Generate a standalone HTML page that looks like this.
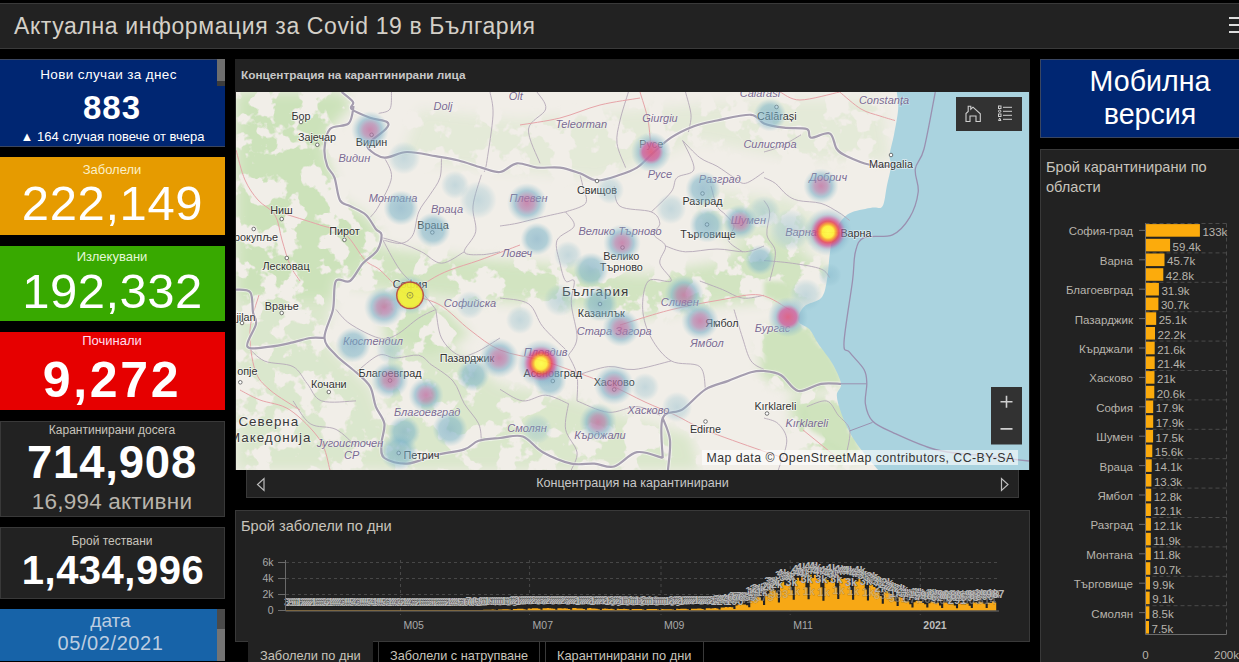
<!DOCTYPE html>
<html><head><meta charset="utf-8">
<style>
*{margin:0;padding:0;box-sizing:border-box}
html,body{width:1239px;height:662px;overflow:hidden;background:#000;font-family:"Liberation Sans",sans-serif}
.a{position:absolute}
.t{position:absolute;white-space:nowrap;line-height:1}
#hdr{left:0;top:3px;width:1239px;height:46px;background:#222;border-top:1px solid #3a3a3a;border-bottom:1px solid #3a3a3a}
.card{position:absolute;left:0;width:225px}
.c{text-align:center}
.ham{position:absolute;left:1229px;width:12px;height:2px;background:#ddd}
</style></head><body>
<div id="hdr" class="a"></div>
<div class="t" style="left:14px;top:15px;font-size:23px;letter-spacing:.6px;color:#d4d0c8">Актуална информация за Covid 19 в България</div>
<div class="ham" style="top:17px"></div><div class="ham" style="top:24px"></div><div class="ham" style="top:31px"></div>

<!-- left column -->
<div class="card" style="top:59px;height:88px;background:#002672;border-top:1px solid #3a4660;border-bottom:1px solid #3a4660"></div>
<div class="a" style="left:217px;top:59px;width:8px;height:27px;background:#3c3c3c"></div>
<div class="a" style="left:217px;top:59px;width:8px;height:22px;background:#6e6e6e"></div>
<div class="t c" style="left:0;width:217px;top:68px;font-size:13.5px;letter-spacing:0.35px;color:#fff">Нови случаи за днес</div>
<div class="t c" style="left:0;width:224px;top:91px;font-size:33px;font-weight:bold;color:#fff;letter-spacing:1px">883</div>
<div class="t c" style="left:0;width:225px;top:130px;font-size:13px;color:#fff">▲ 164 случая повече от вчера</div>

<div class="card" style="top:157px;height:78px;background:#e69b00"></div>
<div class="t c" style="left:0;width:224px;top:163px;font-size:13px;color:#fbf0c8">Заболели</div>
<div class="t c" style="left:0;width:225px;top:179px;font-size:49px;color:#fff;letter-spacing:0.6px">222,149</div>

<div class="card" style="top:246px;height:75px;background:#38a900"></div>
<div class="t c" style="left:0;width:224px;top:250px;font-size:13px;color:#e4f8d8">Излекувани</div>
<div class="t c" style="left:0;width:225px;top:266.5px;font-size:49px;color:#fff;letter-spacing:0.5px">192,332</div>

<div class="card" style="top:332px;height:78px;background:#e60000"></div>
<div class="t c" style="left:0;width:224px;top:334px;font-size:13px;color:#fde">Починали</div>
<div class="t c" style="left:0;width:224px;top:355px;font-size:50px;font-weight:bold;color:#fff;letter-spacing:2.7px">9,272</div>

<div class="card" style="top:421px;height:96px;background:#222;border:1px solid #393939"></div>
<div class="t c" style="left:0;width:224px;top:424px;font-size:12px;color:#c8c4bc">Карантинирани досега</div>
<div class="t c" style="left:0;width:224px;top:440px;font-size:45.5px;font-weight:bold;color:#fff;letter-spacing:0.8px">714,908</div>
<div class="t c" style="left:0;width:224px;top:491px;font-size:22.5px;color:#b8b4ac;letter-spacing:0.2px">16,994 активни</div>

<div class="card" style="top:527px;height:72px;background:#222;border:1px solid #393939"></div>
<div class="t c" style="left:0;width:224px;top:535px;font-size:12px;color:#c8c4bc">Брой тествани</div>
<div class="t c" style="left:0;width:226px;top:550px;font-size:40px;font-weight:bold;color:#fff;letter-spacing:0.5px">1,434,996</div>

<div class="card" style="top:609px;height:52px;background:#1763a8"></div>
<div class="a" style="left:217px;top:609px;width:8px;height:52px;background:#747474"></div>
<div class="a" style="left:217px;top:609px;width:8px;height:20px;background:#4a4a4a"></div>
<div class="t c" style="left:0;width:221px;top:611px;font-size:19px;color:#bccde0">дата</div>
<div class="t c" style="left:0;width:221px;top:633px;font-size:20px;letter-spacing:0.6px;color:#bccde0">05/02/2021</div>

<!-- map panel -->
<div class="a" style="left:235px;top:59px;width:795px;height:411px;background:#222"></div>
<div class="t" style="left:241px;top:70px;font-size:11.8px;font-weight:bold;color:#c8c8c8">Концентрация на карантинирани лица</div>
<!--MAP-->
<svg class="a" style="left:236px;top:92px" width="793" height="378" viewBox="236 92 793 378">
<defs>
<filter id="bl" x="-20%" y="-20%" width="140%" height="140%"><feGaussianBlur stdDeviation="4"/></filter>
<filter id="forest" x="236" y="92" width="793" height="378" filterUnits="userSpaceOnUse" color-interpolation-filters="sRGB"><feTurbulence type="fractalNoise" baseFrequency="0.04" numOctaves="4" seed="5" result="n"/><feColorMatrix in="n" type="matrix" values="0 0 0 0 0.80  0 0 0 0 0.885  0 0 0 0 0.73  16 0 0 0 -6.9"/></filter>
<filter id="bl6" x="-20%" y="-20%" width="140%" height="140%"><feGaussianBlur stdDeviation="6"/></filter>
<filter id="bl2" x="-20%" y="-20%" width="140%" height="140%"><feGaussianBlur stdDeviation="2"/></filter>
<radialGradient id="hb"><stop offset="0" stop-color="#74aac4" stop-opacity=".62"/><stop offset=".62" stop-color="#7cb4c8" stop-opacity=".55"/><stop offset=".85" stop-color="#8cbccc" stop-opacity=".22"/><stop offset="1" stop-color="#9cc8d8" stop-opacity="0"/></radialGradient>
<radialGradient id="hf"><stop offset="0" stop-color="#80b4c8" stop-opacity=".4"/><stop offset=".6" stop-color="#8cbccc" stop-opacity=".3"/><stop offset=".85" stop-color="#8cbccc" stop-opacity=".12"/><stop offset="1" stop-color="#9cc8d8" stop-opacity="0"/></radialGradient>
<radialGradient id="hp"><stop offset="0" stop-color="#c070a0" stop-opacity=".8"/><stop offset=".35" stop-color="#a878a8" stop-opacity=".65"/><stop offset=".62" stop-color="#7cb0c8" stop-opacity=".58"/><stop offset=".85" stop-color="#8cbccc" stop-opacity=".22"/><stop offset="1" stop-color="#9cc8d8" stop-opacity="0"/></radialGradient>
<radialGradient id="hr"><stop offset="0" stop-color="#dc5a80" stop-opacity=".92"/><stop offset=".42" stop-color="#c864a0" stop-opacity=".85"/><stop offset=".62" stop-color="#90b8cc" stop-opacity=".65"/><stop offset=".82" stop-color="#8cbccc" stop-opacity=".3"/><stop offset="1" stop-color="#8cc0d0" stop-opacity="0"/></radialGradient>
<radialGradient id="hy"><stop offset="0" stop-color="#ffff40"/><stop offset=".24" stop-color="#fff030"/><stop offset=".33" stop-color="#f8a028"/><stop offset=".45" stop-color="#e44058" stop-opacity=".95"/><stop offset=".58" stop-color="#c04c98" stop-opacity=".75"/><stop offset=".74" stop-color="#80aac8" stop-opacity=".45"/><stop offset="1" stop-color="#8cc0d0" stop-opacity="0"/></radialGradient>
</defs>
<rect x="236" y="92" width="793" height="378" fill="#f1eee8"/>
<mask id="gm" maskUnits="userSpaceOnUse" x="236" y="92" width="793" height="378"><g fill="#fff" filter="url(#bl6)"><path d="M236.0 92.0 L341.0 92.0 L352.0 105.0 L330.0 129.0 L324.0 150.0 L334.0 178.0 L340.0 200.0 L365.0 215.0 L381.0 235.0 L363.0 263.0 L336.0 281.0 L333.0 300.0 L236.0 300.0 Z" fill-opacity="1.0"/><path d="M236.0 300.0 L333.0 300.0 L324.0 338.0 L336.0 355.0 L370.0 387.0 L384.0 424.0 L384.0 470.0 L236.0 470.0 Z" fill-opacity="0.6"/><path d="M345.0 240.0 L400.0 250.0 L470.0 258.0 L560.0 265.0 L640.0 275.0 L720.0 262.0 L760.0 235.0 L800.0 250.0 L830.0 270.0 L800.0 300.0 L720.0 305.0 L640.0 318.0 L560.0 305.0 L470.0 300.0 L400.0 292.0 L345.0 285.0 Z" fill-opacity="0.85"/><path d="M380.0 300.0 L440.0 305.0 L470.0 335.0 L430.0 355.0 L385.0 335.0 Z" fill-opacity="0.9"/><path d="M384.0 330.0 L450.0 345.0 L500.0 385.0 L560.0 395.0 L620.0 415.0 L690.0 435.0 L700.0 470.0 L384.0 470.0 Z" fill-opacity="0.62"/><path d="M760.0 330.0 L805.0 322.0 L830.0 350.0 L842.0 385.0 L800.0 392.0 L762.0 378.0 Z" fill-opacity="1.0"/><path d="M790.0 398.0 L845.0 400.0 L875.0 455.0 L840.0 465.0 L795.0 440.0 Z" fill-opacity="1.0"/><path d="M420.0 110.0 L520.0 120.0 L640.0 110.0 L760.0 100.0 L880.0 100.0 L890.0 160.0 L800.0 160.0 L700.0 140.0 L600.0 178.0 L480.0 168.0 L400.0 160.0 Z" fill-opacity="0.35"/><path d="M700.0 190.0 L790.0 200.0 L830.0 230.0 L800.0 250.0 L740.0 250.0 L700.0 220.0 Z" fill-opacity="0.45"/></g></mask>
<g mask="url(#gm)"><rect x="236" y="92" width="793" height="378" filter="url(#forest)"/></g>
<path d="M764.0 338.0 C765.9 337.1 770.6 333.8 775.4 332.4 C780.2 331.0 787.4 330.0 792.6 329.5 C797.8 329.0 802.5 327.1 806.8 329.5 C811.1 331.9 814.0 338.1 818.3 343.8 C822.6 349.5 828.9 357.4 832.5 363.8 C836.1 370.2 841.6 379.1 839.7 382.4 C837.8 385.7 827.9 382.4 821.0 383.8 C814.1 385.2 805.0 392.4 798.3 391.0 C791.6 389.6 786.7 378.5 781.0 375.2 C775.3 371.9 766.8 371.7 764.0 371.0 Z M806.8 406.6 C810.6 406.1 824.0 402.8 829.7 403.8 C835.4 404.8 837.7 407.6 841.0 412.4 C844.3 417.1 846.4 426.1 849.7 432.3 C853.0 438.5 861.0 446.2 861.0 449.5 C861.0 452.8 854.9 453.7 849.7 452.3 C844.5 450.9 836.4 444.8 829.7 441.0 C823.0 437.2 813.0 431.4 809.7 429.5 Z M764.0 281.0 C767.8 281.3 782.7 280.2 787.0 283.0 C791.3 285.8 792.0 295.2 790.0 298.0 C788.0 300.8 779.3 300.3 775.0 300.0 C770.7 299.7 765.8 296.7 764.0 296.0 Z" fill="#cfe3bd" filter="url(#bl2)"/>
<path d="M896.8 92.0 C897.0 94.8 898.7 101.9 898.2 109.0 C897.7 116.1 895.4 127.2 894.0 134.8 C892.6 142.4 890.1 149.6 889.6 154.8 C889.1 160.0 891.5 161.0 891.0 166.2 C890.5 171.4 888.2 179.5 886.8 186.2 C885.4 192.9 884.9 202.6 882.5 206.2 C880.1 209.8 877.5 206.6 872.5 207.6 C867.5 208.6 857.2 210.3 852.5 212.0 C847.8 213.7 846.4 215.2 844.0 217.6 C841.6 220.0 838.7 223.8 838.2 226.2 C837.7 228.6 842.0 229.6 841.0 232.0 C840.0 234.4 834.4 236.7 832.5 240.5 C830.6 244.3 830.7 248.1 829.7 254.8 C828.8 261.6 828.2 273.8 826.8 281.0 C825.4 288.2 824.9 293.8 821.1 298.1 C817.3 302.4 807.8 302.9 804.0 306.7 C800.2 310.5 797.3 317.2 798.3 321.0 C799.2 324.8 806.4 325.7 809.7 329.5 C813.0 333.3 814.5 338.1 818.3 343.8 C822.1 349.5 828.7 357.1 832.5 363.8 C836.3 370.5 840.3 378.6 841.0 383.8 C841.7 389.0 836.8 390.4 836.8 395.2 C836.8 400.0 838.9 406.2 841.0 412.4 C843.1 418.6 846.4 426.1 849.7 432.3 C853.0 438.5 856.2 443.2 861.0 449.5 C865.8 455.8 875.3 466.6 878.2 470.0 L1029 470 L1029 92 Z" fill="#aad3df"/>
<path d="M391.5 92.0 C391.2 94.8 392.1 105.4 390.0 109.0 C387.9 112.6 380.6 112.7 378.7 113.4 M490.0 92.0 C490.5 95.8 493.5 103.6 493.0 115.0 C492.5 126.4 488.4 151.0 487.0 160.5 C485.6 170.0 484.8 170.1 484.3 172.0 M384.4 157.6 C385.6 160.9 392.4 169.5 391.5 177.6 C390.6 185.7 382.3 199.3 378.7 206.0 C375.1 212.7 371.4 215.7 370.0 217.6 M441.5 156.0 C441.2 159.6 441.9 171.2 440.0 177.6 C438.1 184.0 433.6 189.0 430.0 194.7 C426.4 200.4 421.5 205.3 418.7 212.0 C415.9 218.7 415.9 229.5 413.0 234.7 C410.1 239.9 406.3 242.4 401.5 243.3 C396.7 244.2 387.2 240.9 384.4 240.4 M481.4 174.8 C480.0 180.0 473.9 196.5 473.0 206.0 C472.1 215.5 477.1 224.2 475.7 231.8 C474.2 239.4 463.4 248.0 464.3 251.8 C465.2 255.6 475.4 254.7 481.4 254.7 C487.3 254.7 496.9 252.3 500.0 251.8 M381.5 237.5 C384.8 238.5 394.8 240.9 401.5 243.3 C408.2 245.7 414.8 248.5 421.5 251.8 C428.2 255.1 434.4 263.2 441.5 263.2 C448.6 263.2 460.5 253.7 464.3 251.8 M537.0 92.0 C538.5 94.8 547.1 102.8 545.7 109.0 C544.3 115.2 529.5 120.0 528.5 129.0 C527.5 138.1 538.1 157.6 540.0 163.3 M628.4 92.0 C627.0 96.8 621.9 111.9 620.0 120.5 C618.1 129.1 616.1 135.6 617.0 143.4 C617.9 151.2 624.2 163.6 625.6 167.6 M685.5 92.0 C686.4 95.8 690.5 108.1 691.0 114.8 C691.5 121.5 688.8 129.1 688.4 132.0 M565.6 211.9 C568.9 210.5 582.7 207.6 585.6 203.3 C588.5 199.0 583.7 190.9 582.8 186.2 C581.9 181.4 580.5 176.7 580.0 174.8 M500.0 226.0 C502.8 225.6 510.3 224.7 517.0 223.3 C523.7 221.9 531.9 219.5 540.0 217.6 C548.1 215.7 561.3 212.8 565.6 211.9 M565.6 211.9 C567.0 214.3 575.6 221.3 574.2 226.1 C572.8 230.8 559.4 234.2 557.0 240.4 C554.6 246.6 558.6 256.4 560.0 263.2 C561.4 270.0 563.2 278.0 565.6 281.0 C568.0 284.0 573.2 277.2 574.2 281.0 C575.2 284.8 570.8 294.3 571.3 303.8 C571.8 313.3 577.5 329.4 577.0 338.0 C576.5 346.6 569.9 352.3 568.5 355.2 M614.2 186.2 C615.2 189.5 613.8 201.9 620.0 206.2 C626.2 210.5 644.7 209.1 651.3 211.9 C657.9 214.8 659.3 219.5 659.8 223.3 C660.2 227.1 653.0 230.9 654.0 234.7 C655.0 238.5 664.5 241.2 665.5 246.0 C666.5 250.8 658.8 257.4 659.8 263.2 C660.8 269.0 673.1 278.0 671.2 281.0 C669.3 284.0 653.1 276.2 648.4 281.0 C643.6 285.8 642.2 300.0 642.7 309.5 C643.2 319.0 646.5 329.4 651.3 338.0 C656.0 346.6 663.1 356.1 671.2 360.9 C679.3 365.7 694.1 361.9 699.8 366.6 C705.5 371.4 704.5 385.6 705.5 389.4 M651.3 211.9 C654.6 208.6 666.9 197.6 671.2 191.9 C675.5 186.2 673.2 181.4 677.0 177.6 C680.8 173.8 693.1 175.2 694.0 169.0 C694.9 162.8 684.5 145.2 682.6 140.5 M711.0 186.2 C712.0 189.5 714.6 201.4 717.0 206.2 C719.4 210.9 722.7 211.4 725.5 214.7 C728.3 218.0 733.5 221.8 734.0 226.1 C734.5 230.4 726.9 236.1 728.3 240.4 C729.7 244.7 740.2 249.9 742.6 251.8 M665.5 246.0 C668.8 247.0 676.9 251.3 685.5 251.8 C694.1 252.3 707.0 249.0 717.0 249.0 C727.0 249.0 737.6 252.3 745.4 251.8 C753.2 251.3 760.9 247.0 764.0 246.0 M682.6 140.5 C685.5 143.3 694.1 153.3 699.8 157.6 C705.5 161.9 711.3 162.9 717.0 166.2 C722.7 169.5 729.3 174.8 734.0 177.6 C738.7 180.4 740.4 184.2 745.4 183.3 C750.4 182.4 760.9 173.9 764.0 172.0 M764.0 152.0 C766.8 151.1 774.8 149.2 781.0 146.3 C787.2 143.4 797.7 136.7 801.0 134.8 M764.0 177.6 C765.9 178.6 771.6 180.5 775.4 183.4 C779.2 186.3 783.0 192.0 786.8 194.8 C790.6 197.7 792.6 199.1 798.3 200.5 C804.0 201.9 814.4 201.5 821.0 203.4 C827.6 205.3 833.2 209.2 838.0 212.0 C842.8 214.8 847.8 219.1 849.7 220.5 M764.0 200.5 C765.0 202.4 769.2 206.3 769.7 212.0 C770.2 217.7 766.0 228.1 766.9 234.8 C767.8 241.5 774.9 244.3 775.4 252.0 C775.9 259.7 770.7 276.2 769.7 281.0 M764.0 260.5 C768.8 261.0 783.1 261.9 792.6 263.3 C802.1 264.7 814.8 266.6 821.0 269.0 C827.2 271.4 828.2 276.2 829.7 277.6 M336.0 309.5 C338.3 311.9 342.9 319.1 350.0 323.8 C357.1 328.6 371.1 336.1 378.7 338.0 C386.3 339.9 389.1 338.5 395.8 335.2 C402.5 331.9 412.0 322.4 418.7 318.1 C425.4 313.8 432.9 310.9 435.8 309.5 M356.0 372.3 C359.8 369.4 372.1 357.6 378.7 355.2 C385.3 352.8 389.1 358.0 395.8 358.0 C402.5 358.0 413.0 354.2 418.7 355.2 C424.4 356.2 428.1 362.4 430.0 363.8 M435.8 309.5 C436.8 314.2 437.7 330.4 441.5 338.0 C445.3 345.6 452.9 352.8 458.6 355.2 C464.3 357.6 468.8 355.3 475.7 352.4 C482.6 349.5 495.9 340.4 500.0 338.0 M430.0 363.8 C433.8 366.7 447.3 374.4 453.0 381.0 C458.7 387.6 460.0 396.6 464.3 403.7 C468.6 410.8 475.8 417.5 478.6 423.7 C481.5 429.9 480.9 437.9 481.4 440.8 M247.4 346.6 C250.2 349.0 256.9 357.7 264.5 361.0 C272.1 364.3 285.9 362.8 293.0 366.6 C300.1 370.4 302.5 378.0 307.3 383.7 C312.1 389.4 313.5 398.0 321.6 400.9 C329.7 403.8 350.3 400.9 356.0 400.9 M293.0 400.9 C295.9 404.7 303.0 418.9 310.2 423.7 C317.4 428.4 328.4 425.6 336.0 429.4 C343.6 433.2 352.7 443.6 356.0 446.5 M500.0 298.0 C504.8 299.0 521.4 299.0 528.5 303.8 C535.6 308.6 536.6 319.1 542.8 326.7 C549.0 334.3 561.8 345.7 565.6 349.5 M577.0 375.2 C582.2 373.8 598.9 367.6 608.4 366.6 C617.9 365.7 623.5 370.4 634.0 369.5 C644.5 368.6 665.0 362.3 671.2 360.9 M577.0 400.9 C582.2 402.8 598.4 411.4 608.4 412.3 C618.4 413.2 628.4 406.1 637.0 406.6 C645.6 407.1 656.0 413.7 659.8 415.1 M568.5 403.7 C568.0 408.0 564.2 421.3 565.6 429.4 C567.0 437.5 576.0 445.4 577.0 452.2 C578.0 459.0 572.2 467.0 571.3 470.0 M500.0 389.4 C503.8 391.3 515.2 399.9 522.8 400.9 C530.4 401.9 538.1 394.7 545.7 395.2 C553.3 395.7 564.7 402.3 568.5 403.7 M734.0 309.5 C735.4 314.2 739.8 329.4 742.6 338.0 C745.4 346.6 747.4 355.6 751.0 360.9 C754.6 366.1 761.8 368.1 764.0 369.5 M699.8 281.0 C703.6 282.4 715.5 286.8 722.6 289.6 C729.7 292.5 735.7 297.2 742.6 298.1 C749.5 299.1 760.4 295.8 764.0 295.3 M764.0 418.0 C766.4 419.0 774.5 420.0 778.3 423.8 C782.1 427.6 786.8 433.3 786.8 441.0 C786.8 448.7 779.7 465.2 778.3 470.0 M806.8 406.6 C810.1 405.7 821.6 399.6 826.8 401.0 C832.0 402.4 834.4 410.4 838.2 415.2 C842.0 419.9 848.3 423.3 849.7 429.5 C851.1 435.7 847.3 448.5 846.8 452.3 M435.8 309.5 C433.2 306.2 426.0 296.6 420.0 290.0 C414.0 283.4 406.4 278.8 400.0 270.0 C393.6 261.2 384.6 242.9 381.5 237.5 M568.5 355.2 C569.9 358.5 575.6 367.6 577.0 375.2 C578.4 382.8 577.0 396.6 577.0 400.9" fill="none" stroke="#b4a8b8" stroke-width="0.9"/>
<path d="M236.0 150.0 C237.5 155.0 241.3 171.7 245.0 180.0 C248.7 188.3 253.0 194.2 258.0 200.0 C263.0 205.8 271.0 208.3 275.0 215.0 C279.0 221.7 279.5 231.7 282.0 240.0 C284.5 248.3 287.0 258.2 290.0 265.0 C293.0 271.8 298.3 278.3 300.0 281.0 M282.0 213.0 C288.3 215.0 309.5 221.5 320.0 225.0 C330.5 228.5 337.5 228.2 345.0 234.0 C352.5 239.8 359.2 254.0 365.0 260.0 C370.8 266.0 374.2 265.0 380.0 270.0 C385.8 275.0 395.0 285.8 400.0 290.0 C405.0 294.2 408.3 294.2 410.0 295.0 M410.0 295.0 C415.0 296.7 430.0 299.2 440.0 305.0 C450.0 310.8 460.0 322.5 470.0 330.0 C480.0 337.5 488.3 345.0 500.0 350.0 C511.7 355.0 528.3 356.7 540.0 360.0 C551.7 363.3 558.3 365.8 570.0 370.0 C581.7 374.2 597.5 379.7 610.0 385.0 C622.5 390.3 634.2 397.0 645.0 402.0 C655.8 407.0 665.0 410.3 675.0 415.0 C685.0 419.7 690.8 424.2 705.0 430.0 C719.2 435.8 745.8 445.0 760.0 450.0 C774.2 455.0 785.0 458.3 790.0 460.0 M620.0 325.0 C628.3 322.5 653.3 314.2 670.0 310.0 C686.7 305.8 705.0 302.5 720.0 300.0 C735.0 297.5 748.3 293.3 760.0 295.0 C771.7 296.7 785.0 307.5 790.0 310.0 M240.0 390.0 C243.3 391.7 251.7 396.7 260.0 400.0 C268.3 403.3 280.0 403.3 290.0 410.0 C300.0 416.7 313.3 430.0 320.0 440.0 C326.7 450.0 328.3 465.0 330.0 470.0 M259.0 295.0 C257.5 300.8 250.7 317.5 250.0 330.0 C249.3 342.5 251.7 360.0 255.0 370.0 C258.3 380.0 262.5 383.3 270.0 390.0 C277.5 396.7 295.0 406.7 300.0 410.0 M803.0 430.0 L840.0 460.0 M839.7 92.0 C843.2 94.8 854.3 105.0 861.0 109.0 C867.7 113.0 874.3 114.1 880.0 116.0 C885.7 117.9 892.5 119.8 895.0 120.5 M780.0 92.0 C783.3 93.3 790.0 100.0 800.0 100.0 C810.0 100.0 833.1 93.3 839.7 92.0 M640.0 92.0 C641.3 96.7 646.2 110.3 648.0 120.0 C649.8 129.7 650.5 145.0 651.0 150.0 M520.0 125.0 C526.7 123.8 546.7 121.3 560.0 118.0 C573.3 114.7 586.7 108.3 600.0 105.0 C613.3 101.7 633.3 99.2 640.0 98.0 M790.0 230.0 C795.0 230.3 811.7 231.5 820.0 232.0 C828.3 232.5 836.7 232.8 840.0 233.0 M410.0 295.0 C413.3 292.5 423.3 284.2 430.0 280.0 C436.7 275.8 441.7 273.3 450.0 270.0 C458.3 266.7 468.3 264.2 480.0 260.0 C491.7 255.8 513.3 247.5 520.0 245.0" fill="none" stroke="#e6a4a8" stroke-width="1"/>
<path d="M935.3 92.0 C933.4 101.5 927.3 136.2 924.0 149.0 C920.7 161.8 916.3 161.8 915.3 169.0 C914.3 176.2 919.2 183.9 918.2 192.0 C917.2 200.1 913.9 210.5 909.6 217.6 C905.3 224.7 900.1 231.5 892.5 234.8 C884.9 238.1 870.2 234.7 864.0 237.6 C857.8 240.5 857.3 244.8 855.4 252.0 C853.5 259.2 854.4 265.9 852.5 281.0 C850.6 296.1 844.5 330.5 844.0 342.4 C843.5 354.3 846.4 347.9 849.7 352.4 C853.0 356.9 861.1 364.3 864.0 369.5 C866.9 374.7 866.6 378.1 866.8 383.8 C867.0 389.5 864.4 397.6 865.4 403.8 C866.4 410.0 868.0 416.2 872.5 421.0 C877.0 425.8 882.0 427.6 892.5 432.3 C903.0 437.1 921.0 445.7 935.3 449.5 C949.5 453.3 962.4 453.3 978.0 455.2 C993.6 457.1 1020.5 460.0 1029.0 461.0" fill="none" stroke="#9a90b0" stroke-width="1.3"/>
<path d="M841 383.8H866.8M849.7 430.9L872.5 422.4" fill="none" stroke="#9a90b0" stroke-width="1"/>
<path d="M341.6 92.0 C343.5 93.7 351.3 99.2 353.0 102.0 C354.7 104.8 348.8 106.4 351.6 109.0 C354.4 111.6 364.1 115.5 370.0 117.7 C375.9 119.9 384.4 120.1 387.0 122.0 C389.6 123.9 388.6 125.7 385.8 129.0 C383.0 132.3 372.9 138.7 370.0 142.0 C367.1 145.3 366.3 146.4 368.7 149.0 C371.1 151.6 378.0 157.1 384.4 157.6 C390.8 158.1 398.4 152.2 407.0 152.0 C415.6 151.8 427.2 154.8 435.8 156.2 C444.4 157.6 451.0 158.6 458.6 160.5 C466.2 162.4 474.5 165.7 481.4 167.6 C488.3 169.5 494.1 172.7 500.0 172.0 C505.9 171.3 510.8 164.0 517.0 163.3 C523.2 162.6 529.8 166.9 537.0 167.6 C544.2 168.3 552.8 166.6 560.0 167.6 C567.2 168.6 573.8 171.2 580.0 173.3 C586.2 175.5 590.3 180.2 597.0 180.5 C603.7 180.8 613.3 177.0 620.0 174.8 C626.7 172.7 631.8 170.9 637.0 167.6 C642.2 164.3 645.3 159.8 651.0 154.8 C656.7 149.8 663.8 142.5 671.0 137.7 C678.2 132.9 686.3 129.1 694.0 126.2 C701.7 123.3 707.5 122.4 717.0 120.5 C726.5 118.6 743.2 114.3 751.0 114.8 C758.8 115.3 758.5 121.2 764.0 123.4 C769.5 125.6 776.9 126.8 784.0 127.7 C791.1 128.6 802.3 127.3 806.8 129.0 C811.3 130.7 807.2 137.0 811.0 137.7 C814.8 138.4 825.4 131.5 829.7 133.4 C834.0 135.3 833.9 145.2 836.8 149.0 C839.6 152.8 841.3 153.6 846.8 156.2 C852.3 158.8 862.6 163.1 869.7 164.8 C876.8 166.5 886.3 166.0 889.6 166.2 M353.6 106.0 C352.8 108.9 352.6 119.6 348.7 123.4 C344.8 127.2 334.0 124.7 330.0 129.0 C326.0 133.3 324.9 142.8 324.5 149.0 C324.1 155.2 325.6 161.4 327.3 166.2 C329.0 171.0 332.4 171.9 334.5 177.6 C336.6 183.3 337.4 195.7 340.0 200.4 C342.6 205.1 345.7 203.6 350.0 206.0 C354.3 208.4 361.5 210.9 365.8 214.7 C370.1 218.5 373.2 225.7 375.8 229.0 C378.4 232.3 381.2 231.1 381.5 234.7 C381.8 238.3 380.4 245.7 377.3 250.4 C374.2 255.2 367.6 258.1 363.0 263.2 C358.4 268.3 354.5 278.0 350.0 281.0 C345.5 284.0 338.7 276.2 335.9 281.0 C333.1 285.8 334.9 300.0 333.0 309.5 C331.1 319.0 324.0 330.4 324.5 338.0 C325.0 345.6 330.8 349.5 336.0 355.2 C341.2 360.9 350.3 367.1 356.0 372.3 C361.7 377.5 366.8 380.9 370.1 386.6 C373.4 392.3 373.4 400.4 375.8 406.6 C378.2 412.8 383.4 417.5 384.4 423.7 C385.3 429.9 381.5 438.0 381.5 443.7 C381.5 449.4 380.1 454.7 384.4 458.0 C388.7 461.3 398.6 464.1 407.2 463.6 C415.8 463.1 426.3 457.4 435.8 455.0 C445.3 452.6 457.2 451.8 464.3 449.4 C471.4 447.0 472.7 442.7 478.6 440.8 C484.6 438.9 492.6 438.7 500.0 438.0 C507.4 437.3 515.7 434.1 522.8 436.5 C529.9 438.9 534.7 447.7 542.8 452.2 C550.9 456.7 562.7 461.7 571.3 463.6 C579.9 465.5 587.1 463.1 594.2 463.6 C601.4 464.1 607.1 468.4 614.2 466.5 C621.3 464.6 628.9 453.6 637.0 452.2 C645.1 450.8 658.4 457.0 662.7 458.0 M662.7 458.0 C662.7 451.3 659.4 426.1 662.7 418.0 C666.0 409.9 675.5 414.2 682.6 409.4 C689.7 404.6 697.9 394.1 705.5 389.4 C713.1 384.6 720.7 383.8 728.3 380.9 C735.9 378.0 745.0 373.9 751.0 372.3 C757.0 370.7 759.0 370.5 764.0 371.0 C769.0 371.5 775.3 371.9 781.0 375.2 C786.7 378.5 791.6 389.6 798.3 391.0 C805.0 392.4 813.9 385.0 821.0 383.8 C828.1 382.6 837.7 383.8 841.0 383.8 M662.7 418.0 C663.9 421.7 669.1 431.3 670.0 440.0 C670.9 448.7 668.3 465.0 668.0 470.0 M236.0 289.6 C238.4 290.1 247.5 288.6 250.3 292.4 C253.1 296.2 252.1 307.2 253.0 312.4 C253.9 317.6 256.9 318.1 256.0 323.8 C255.1 329.5 245.0 342.8 247.4 346.6 C249.8 350.4 262.6 347.3 270.2 346.6 C277.8 345.9 286.3 343.8 293.0 342.4 C299.7 341.0 304.9 338.7 310.2 338.0 C315.4 337.3 322.1 338.0 324.5 338.0" fill="none" stroke="#fff" stroke-opacity=".5" stroke-width="4"/>
<path d="M341.6 92.0 C343.5 93.7 351.3 99.2 353.0 102.0 C354.7 104.8 348.8 106.4 351.6 109.0 C354.4 111.6 364.1 115.5 370.0 117.7 C375.9 119.9 384.4 120.1 387.0 122.0 C389.6 123.9 388.6 125.7 385.8 129.0 C383.0 132.3 372.9 138.7 370.0 142.0 C367.1 145.3 366.3 146.4 368.7 149.0 C371.1 151.6 378.0 157.1 384.4 157.6 C390.8 158.1 398.4 152.2 407.0 152.0 C415.6 151.8 427.2 154.8 435.8 156.2 C444.4 157.6 451.0 158.6 458.6 160.5 C466.2 162.4 474.5 165.7 481.4 167.6 C488.3 169.5 494.1 172.7 500.0 172.0 C505.9 171.3 510.8 164.0 517.0 163.3 C523.2 162.6 529.8 166.9 537.0 167.6 C544.2 168.3 552.8 166.6 560.0 167.6 C567.2 168.6 573.8 171.2 580.0 173.3 C586.2 175.5 590.3 180.2 597.0 180.5 C603.7 180.8 613.3 177.0 620.0 174.8 C626.7 172.7 631.8 170.9 637.0 167.6 C642.2 164.3 645.3 159.8 651.0 154.8 C656.7 149.8 663.8 142.5 671.0 137.7 C678.2 132.9 686.3 129.1 694.0 126.2 C701.7 123.3 707.5 122.4 717.0 120.5 C726.5 118.6 743.2 114.3 751.0 114.8 C758.8 115.3 758.5 121.2 764.0 123.4 C769.5 125.6 776.9 126.8 784.0 127.7 C791.1 128.6 802.3 127.3 806.8 129.0 C811.3 130.7 807.2 137.0 811.0 137.7 C814.8 138.4 825.4 131.5 829.7 133.4 C834.0 135.3 833.9 145.2 836.8 149.0 C839.6 152.8 841.3 153.6 846.8 156.2 C852.3 158.8 862.6 163.1 869.7 164.8 C876.8 166.5 886.3 166.0 889.6 166.2 M353.6 106.0 C352.8 108.9 352.6 119.6 348.7 123.4 C344.8 127.2 334.0 124.7 330.0 129.0 C326.0 133.3 324.9 142.8 324.5 149.0 C324.1 155.2 325.6 161.4 327.3 166.2 C329.0 171.0 332.4 171.9 334.5 177.6 C336.6 183.3 337.4 195.7 340.0 200.4 C342.6 205.1 345.7 203.6 350.0 206.0 C354.3 208.4 361.5 210.9 365.8 214.7 C370.1 218.5 373.2 225.7 375.8 229.0 C378.4 232.3 381.2 231.1 381.5 234.7 C381.8 238.3 380.4 245.7 377.3 250.4 C374.2 255.2 367.6 258.1 363.0 263.2 C358.4 268.3 354.5 278.0 350.0 281.0 C345.5 284.0 338.7 276.2 335.9 281.0 C333.1 285.8 334.9 300.0 333.0 309.5 C331.1 319.0 324.0 330.4 324.5 338.0 C325.0 345.6 330.8 349.5 336.0 355.2 C341.2 360.9 350.3 367.1 356.0 372.3 C361.7 377.5 366.8 380.9 370.1 386.6 C373.4 392.3 373.4 400.4 375.8 406.6 C378.2 412.8 383.4 417.5 384.4 423.7 C385.3 429.9 381.5 438.0 381.5 443.7 C381.5 449.4 380.1 454.7 384.4 458.0 C388.7 461.3 398.6 464.1 407.2 463.6 C415.8 463.1 426.3 457.4 435.8 455.0 C445.3 452.6 457.2 451.8 464.3 449.4 C471.4 447.0 472.7 442.7 478.6 440.8 C484.6 438.9 492.6 438.7 500.0 438.0 C507.4 437.3 515.7 434.1 522.8 436.5 C529.9 438.9 534.7 447.7 542.8 452.2 C550.9 456.7 562.7 461.7 571.3 463.6 C579.9 465.5 587.1 463.1 594.2 463.6 C601.4 464.1 607.1 468.4 614.2 466.5 C621.3 464.6 628.9 453.6 637.0 452.2 C645.1 450.8 658.4 457.0 662.7 458.0 M662.7 458.0 C662.7 451.3 659.4 426.1 662.7 418.0 C666.0 409.9 675.5 414.2 682.6 409.4 C689.7 404.6 697.9 394.1 705.5 389.4 C713.1 384.6 720.7 383.8 728.3 380.9 C735.9 378.0 745.0 373.9 751.0 372.3 C757.0 370.7 759.0 370.5 764.0 371.0 C769.0 371.5 775.3 371.9 781.0 375.2 C786.7 378.5 791.6 389.6 798.3 391.0 C805.0 392.4 813.9 385.0 821.0 383.8 C828.1 382.6 837.7 383.8 841.0 383.8 M662.7 418.0 C663.9 421.7 669.1 431.3 670.0 440.0 C670.9 448.7 668.3 465.0 668.0 470.0 M236.0 289.6 C238.4 290.1 247.5 288.6 250.3 292.4 C253.1 296.2 252.1 307.2 253.0 312.4 C253.9 317.6 256.9 318.1 256.0 323.8 C255.1 329.5 245.0 342.8 247.4 346.6 C249.8 350.4 262.6 347.3 270.2 346.6 C277.8 345.9 286.3 343.8 293.0 342.4 C299.7 341.0 304.9 338.7 310.2 338.0 C315.4 337.3 322.1 338.0 324.5 338.0" fill="none" stroke="#a59daf" stroke-width="2.2"/>
<g font-family="Liberation Sans" font-size="10.8" fill="#333" text-anchor="middle" stroke="#fff" stroke-opacity=".6" stroke-width="1.5" paint-order="stroke"><text x="301" y="119.5">Бор</text><text x="317" y="141.0">Зајечар</text><text x="371.5" y="146.0">Видин</text><text x="281.5" y="213.5">Ниш</text><text x="344.5" y="235.0">Пирот</text><text x="256" y="241.0">рокупље</text><text x="286" y="270.0">Лесковац</text><text x="433" y="229.0">Враца</text><text x="597" y="193.5">Свищов</text><text x="702.5" y="204.5">Разград</text><text x="708" y="238.0">Търговище</text><text x="621.3" y="259.5">Велико</text><text x="621.3" y="271.0">Търново</text><text x="891" y="168.3">Mangalia</text><text x="776.8" y="119.8">Călărași</text><text x="856" y="236.9">Варна</text><text x="410" y="287.9">София</text><text x="281.7" y="309.5">Врање</text><text x="246" y="321.0">jilan</text><text x="247.4" y="375.3">опје</text><text x="328.8" y="387.8">Кочани</text><text x="390" y="376.7">Благоевград</text><text x="651.3" y="148.3">Русе</text><text x="467" y="362.1">Пазарджик</text><text x="421.5" y="459.2">Петрич</text><text x="601.3" y="316.5">Казанлък</text><text x="722" y="326.7">Ямбол</text><text x="552.8" y="377.3">Асеновград</text><text x="614.2" y="386.4">Хасково</text><text x="705.5" y="432.9">Edirne</text><text x="775.4" y="410.1">Kırklareli</text></g>
<g font-family="Liberation Sans" font-size="13.4" fill="#3a3a3a" text-anchor="middle" letter-spacing="1" stroke="#fff" stroke-opacity=".5" stroke-width="1.5" paint-order="stroke"><text x="595.6" y="295.5">България</text><text x="268.8" y="425.9">Северна</text><text x="270.2" y="441.9">Македонија</text></g>
<g font-family="Liberation Sans" font-size="11" font-style="italic" fill="#7a6a92" text-anchor="middle" stroke="#fff" stroke-opacity=".4" stroke-width="1.2" paint-order="stroke"><text x="443" y="110.3">Dolj</text><text x="354.4" y="162.0">Видин</text><text x="393" y="201.9">Монтана</text><text x="447" y="212.5">Враца</text><text x="515.7" y="99.8">Olt</text><text x="581.3" y="127.7">Teleorman</text><text x="660" y="121.8">Giurgiu</text><text x="770" y="148.3">Силистра</text><text x="660" y="178.3">Русе</text><text x="719.7" y="182.5">Разград</text><text x="528.5" y="201.9">Плевен</text><text x="620" y="235.3">Велико Търново</text><text x="748.3" y="223.9">Шумен</text><text x="517" y="256.7">Ловеч</text><text x="884" y="104.1">Constanța</text><text x="828.2" y="180.5">Добрич</text><text x="801" y="235.5">Варна</text><text x="470" y="307.3">Софийска</text><text x="373" y="345.3">Кюстендил</text><text x="427.2" y="416.3">Благоевград</text><text x="350" y="447.2">Jугоисточен</text><text x="351.6" y="459.2">СР</text><text x="614.2" y="335.3">Стара Загора</text><text x="679.8" y="305.9">Сливен</text><text x="707" y="347.3">Ямбол</text><text x="772.6" y="331.5">Бургас</text><text x="545.7" y="355.8">Пловдив</text><text x="648.4" y="414.4">Хасково</text><text x="527" y="432.3">Смолян</text><text x="600" y="438.6">Кърджали</text><text x="806.8" y="426.5">Kırklareli</text><text x="760" y="96.5">Calarasi</text></g>
<g fill="#fff" stroke="#555" stroke-width=".8"><circle cx="301" cy="122" r="1.8"/><circle cx="317.3" cy="144.8" r="1.8"/><circle cx="371.6" cy="134.8" r="1.8"/><circle cx="281.7" cy="219" r="1.8"/><circle cx="344.4" cy="239.8" r="1.8"/><circle cx="253.7" cy="229" r="1.8"/><circle cx="286.8" cy="258" r="1.8"/><circle cx="432.3" cy="232.4" r="1.8"/><circle cx="597" cy="181" r="1.8"/><circle cx="702.5" cy="193.5" r="1.8"/><circle cx="707" cy="224.5" r="1.8"/><circle cx="622.5" cy="247.5" r="1.8"/><circle cx="891" cy="155" r="1.8"/><circle cx="776.5" cy="107" r="1.8"/><circle cx="410" cy="295.3" r="1.8"/><circle cx="281.7" cy="313" r="1.8"/><circle cx="242" cy="323" r="1.8"/><circle cx="240.3" cy="382.3" r="1.8"/><circle cx="328.8" cy="392" r="1.8"/><circle cx="390" cy="380.5" r="1.8"/><circle cx="473" cy="358" r="1.8"/><circle cx="398.7" cy="453" r="1.8"/><circle cx="600" cy="304" r="1.8"/><circle cx="717.5" cy="323" r="1.8"/><circle cx="552.8" cy="381" r="1.8"/><circle cx="614.2" cy="389.5" r="1.8"/><circle cx="705.5" cy="421.5" r="1.8"/><circle cx="767" cy="413.5" r="1.8"/></g>
<g><circle cx="370" cy="130" r="18.9" fill="url(#hp)"/><circle cx="404" cy="158" r="16.5" fill="url(#hf)"/><circle cx="401" cy="208" r="17.7" fill="url(#hb)"/><circle cx="433" cy="230" r="17.7" fill="url(#hb)"/><circle cx="478" cy="200" r="18.9" fill="url(#hf)"/><circle cx="455" cy="185" r="14.2" fill="url(#hf)"/><circle cx="527" cy="203" r="20.1" fill="url(#hp)"/><circle cx="537" cy="239" r="16.5" fill="url(#hb)"/><circle cx="591" cy="270" r="17.7" fill="url(#hb)"/><circle cx="622" cy="243" r="18.9" fill="url(#hp)"/><circle cx="568" cy="255" r="14.2" fill="url(#hf)"/><circle cx="671" cy="209" r="15.3" fill="url(#hf)"/><circle cx="610" cy="190" r="14.2" fill="url(#hf)"/><circle cx="651" cy="152" r="20.1" fill="url(#hr)"/><circle cx="703" cy="189" r="17.7" fill="url(#hb)"/><circle cx="707" cy="225" r="17.7" fill="url(#hb)"/><circle cx="740" cy="222" r="17.7" fill="url(#hp)"/><circle cx="760" cy="260" r="15.3" fill="url(#hb)"/><circle cx="770" cy="115" r="16.5" fill="url(#hb)"/><circle cx="764" cy="212" r="16.5" fill="url(#hf)"/><circle cx="821" cy="186" r="17.7" fill="url(#hp)"/><circle cx="790" cy="230" r="21.2" fill="url(#hf)"/><circle cx="806" cy="295" r="16.5" fill="url(#hf)"/><circle cx="788" cy="317" r="20.1" fill="url(#hr)"/><circle cx="830" cy="275" r="11.8" fill="url(#hf)"/><circle cx="384" cy="307" r="20.1" fill="url(#hp)"/><circle cx="353" cy="345" r="17.7" fill="url(#hb)"/><circle cx="390" cy="350" r="14.2" fill="url(#hf)"/><circle cx="390" cy="380" r="18.9" fill="url(#hp)"/><circle cx="426" cy="395" r="17.7" fill="url(#hp)"/><circle cx="450" cy="429" r="17.7" fill="url(#hb)"/><circle cx="404" cy="432" r="16.5" fill="url(#hb)"/><circle cx="399" cy="452" r="18.9" fill="url(#hb)"/><circle cx="499" cy="358" r="20.1" fill="url(#hp)"/><circle cx="473" cy="375" r="16.5" fill="url(#hb)"/><circle cx="600" cy="304" r="17.7" fill="url(#hb)"/><circle cx="621" cy="328" r="18.9" fill="url(#hp)"/><circle cx="684" cy="295" r="20.1" fill="url(#hp)"/><circle cx="700" cy="321" r="18.9" fill="url(#hp)"/><circle cx="614" cy="385" r="20.1" fill="url(#hp)"/><circle cx="645" cy="387" r="14.2" fill="url(#hf)"/><circle cx="677" cy="407" r="15.3" fill="url(#hf)"/><circle cx="598" cy="422" r="18.9" fill="url(#hp)"/><circle cx="537" cy="429" r="15.3" fill="url(#hf)"/><circle cx="550" cy="381" r="16.5" fill="url(#hb)"/><circle cx="560" cy="300" r="16.5" fill="url(#hf)"/><circle cx="520" cy="320" r="14.2" fill="url(#hf)"/><circle cx="470" cy="305" r="14.2" fill="url(#hf)"/></g>
<circle cx="541" cy="363.6" r="24" fill="url(#hy)" opacity=".88"/>
<circle cx="828" cy="232" r="24" fill="url(#hy)" opacity=".9"/>
<circle cx="410" cy="295" r="20" fill="url(#hb)"/>
<g opacity=".82"><circle cx="410" cy="295.3" r="14" fill="#c04030"/><circle cx="410" cy="295.3" r="12.5" fill="#fbf020"/><circle cx="410" cy="295.3" r="11" fill="#fff825"/></g>
<circle cx="410" cy="295.3" r="3" fill="none" stroke="#8a8a4a" stroke-width=".8"/><circle cx="410" cy="295.3" r=".8" fill="#8a8a4a"/>
<rect x="956" y="97" width="66" height="34" fill="#323232"/>
<path d="M966 121.5V113.5L968.2 111.5V106.2H970.8V109.2L973 107.2L980.3 113.8V121.5H976V116H970V121.5Z" fill="none" stroke="#cfcfcf" stroke-width="1.1" stroke-linejoin="miter"/>
<g fill="none" stroke="#cfcfcf" stroke-width="1"><rect x="998.5" y="106" width="2.5" height="2.5"/><circle cx="999.7" cy="111.2" r="1.2"/><rect x="998.5" y="114" width="2.5" height="2.5"/><path d="M998.5 120.5L999.7 118L1001 120.5Z"/><path d="M1003 107.3H1012M1003 111.3H1012M1003 115.3H1012M1003 119.3H1012"/></g>
<rect x="991" y="387" width="31" height="57.5" fill="#323232"/>
<path d="M1000.5 401.7H1012.5M1006.5 395.7V407.7M1000.5 428.9H1012.5" stroke="#cfcfcf" stroke-width="1.6"/>
<rect x="702" y="450" width="316" height="15" fill="#fff" fill-opacity=".6"/>
<text x="706.5" y="462.3" font-family="Liberation Sans" font-size="12.3" fill="#333" letter-spacing=".47">Map data © OpenStreetMap contributors, CC-BY-SA</text>
</svg>
<!--/MAP-->

<!-- carousel -->
<div class="a" style="left:246px;top:470px;width:773px;height:28px;background:#222;border:1px solid #393939;border-top:none"></div>
<div class="t c" style="left:246px;width:773px;top:477px;font-size:12.6px;color:#c8c8c8">Концентрация на карантинирани</div>

<svg class="a" style="left:246px;top:470px" width="773" height="28" viewBox="246 470 773 28"><path d="M264 478.5V490.5L257.5 484.5Z M1001.5 478.5V490.5L1008 484.5Z" fill="none" stroke="#bdbdbd" stroke-width="1.2"/></svg>
<!-- chart panel -->
<div class="a" style="left:235px;top:510px;width:795px;height:132px;background:#222;border:1px solid #393939"></div>
<div class="t" style="left:241px;top:519px;font-size:14.6px;color:#c8c4bc">Брой заболели по дни</div>

<!--CHART-->
<svg class="a" style="left:235px;top:510px" width="795" height="131" viewBox="235 510 795 131">
<path d="M286 594.5H999 M286 578.5H999 M286 562.5H999 M400.5 560V615 M529.6 560V615 M661 560V615 M790.2 560V615 M920.3 560V615" stroke="#474747" stroke-width="1" stroke-dasharray="3 3" fill="none"/>
<path d="M286.02 610.50V609.90H288.14V610.50ZM288.14 610.50V609.90H290.26V610.50ZM290.26 610.50V609.90H292.38V610.50ZM292.38 610.50V609.90H294.50V610.50ZM294.50 610.50V609.90H296.62V610.50ZM296.62 610.50V609.90H298.74V610.50ZM298.74 610.50V609.90H300.86V610.50ZM300.86 610.50V609.90H302.98V610.50ZM302.98 610.50V609.90H305.10V610.50ZM305.10 610.50V609.90H307.22V610.50ZM307.22 610.50V609.90H309.34V610.50ZM309.34 610.50V609.90H311.46V610.50ZM311.46 610.50V609.90H313.58V610.50ZM313.58 610.50V609.90H315.70V610.50ZM315.70 610.50V609.90H317.82V610.50ZM317.82 610.50V609.90H319.94V610.50ZM319.94 610.50V609.90H322.06V610.50ZM322.06 610.50V609.90H324.18V610.50ZM324.18 610.50V609.90H326.30V610.50ZM326.30 610.50V609.90H328.42V610.50ZM328.42 610.50V609.90H330.54V610.50ZM330.54 610.50V609.90H332.66V610.50ZM332.66 610.50V609.90H334.78V610.50ZM334.78 610.50V609.90H336.90V610.50ZM336.90 610.50V609.90H339.02V610.50ZM339.02 610.50V609.90H341.14V610.50ZM341.14 610.50V609.90H343.26V610.50ZM343.26 610.50V609.90H345.38V610.50ZM345.38 610.50V609.90H347.50V610.50ZM347.50 610.50V609.90H349.62V610.50ZM349.62 610.50V609.90H351.74V610.50ZM351.74 610.50V609.90H353.86V610.50ZM353.86 610.50V609.90H355.98V610.50ZM355.98 610.50V609.90H358.10V610.50ZM358.10 610.50V609.90H360.22V610.50ZM360.22 610.50V609.90H362.34V610.50ZM362.34 610.50V609.90H364.46V610.50ZM364.46 610.50V609.90H366.58V610.50ZM366.58 610.50V609.90H368.70V610.50ZM368.70 610.50V609.90H370.82V610.50ZM370.82 610.50V609.90H372.94V610.50ZM372.94 610.50V609.90H375.06V610.50ZM375.06 610.50V609.90H377.18V610.50ZM377.18 610.50V609.90H379.30V610.50ZM379.30 610.50V609.90H381.42V610.50ZM381.42 610.50V609.90H383.54V610.50ZM383.54 610.50V609.90H385.66V610.50ZM385.66 610.50V609.90H387.78V610.50ZM387.78 610.50V609.90H389.90V610.50ZM389.90 610.50V609.90H392.02V610.50ZM392.02 610.50V609.90H394.14V610.50ZM394.14 610.50V609.90H396.26V610.50ZM396.26 610.50V609.90H398.38V610.50ZM398.38 610.50V609.90H400.50V610.50ZM400.50 610.50V609.90H402.62V610.50ZM402.62 610.50V609.90H404.74V610.50ZM404.74 610.50V609.90H406.86V610.50ZM406.86 610.50V609.90H408.98V610.50ZM408.98 610.50V609.90H411.10V610.50ZM411.10 610.50V609.90H413.22V610.50ZM413.22 610.50V609.90H415.34V610.50ZM415.34 610.50V609.90H417.46V610.50ZM417.46 610.50V609.90H419.58V610.50ZM419.58 610.50V609.90H421.70V610.50ZM421.70 610.50V609.90H423.82V610.50ZM423.82 610.50V609.90H425.94V610.50ZM425.94 610.50V609.90H428.06V610.50ZM428.06 610.50V609.90H430.18V610.50ZM430.18 610.50V609.90H432.30V610.50ZM432.30 610.50V609.90H434.42V610.50ZM434.42 610.50V609.90H436.54V610.50ZM436.54 610.50V609.90H438.66V610.50ZM438.66 610.50V609.90H440.78V610.50ZM440.78 610.50V609.90H442.90V610.50ZM442.90 610.50V609.90H445.02V610.50ZM445.02 610.50V609.90H447.14V610.50ZM447.14 610.50V609.90H449.26V610.50ZM449.26 610.50V609.90H451.38V610.50ZM451.38 610.50V609.90H453.50V610.50ZM453.50 610.50V609.90H455.62V610.50ZM455.62 610.50V609.90H457.74V610.50ZM457.74 610.50V609.90H459.86V610.50ZM459.86 610.50V609.90H461.98V610.50ZM461.98 610.50V609.90H464.10V610.50ZM464.10 610.50V609.90H466.22V610.50ZM466.22 610.50V609.90H468.34V610.50ZM468.34 610.50V609.90H470.46V610.50ZM470.46 610.50V609.90H472.58V610.50ZM472.58 610.50V609.90H474.70V610.50ZM474.70 610.50V609.90H476.82V610.50ZM476.82 610.50V609.90H478.94V610.50ZM478.94 610.50V609.90H481.06V610.50ZM481.06 610.50V609.90H483.18V610.50ZM483.18 610.50V609.76H485.30V610.50ZM485.30 610.50V609.79H487.42V610.50ZM487.42 610.50V609.72H489.54V610.50ZM489.54 610.50V609.69H491.66V610.50ZM491.66 610.50V609.56H493.78V610.50ZM493.78 610.50V609.73H495.90V610.50ZM495.90 610.50V609.90H498.02V610.50ZM498.02 610.50V609.50H500.14V610.50ZM500.14 610.50V609.41H502.26V610.50ZM502.26 610.50V609.37H504.38V610.50ZM504.38 610.50V609.27H506.50V610.50ZM506.50 610.50V609.24H508.62V610.50ZM508.62 610.50V609.57H510.74V610.50ZM510.74 610.50V609.90H512.86V610.50ZM512.86 610.50V609.04H514.98V610.50ZM514.98 610.50V608.97H517.10V610.50ZM517.10 610.50V608.87H519.22V610.50ZM519.22 610.50V608.68H521.34V610.50ZM521.34 610.50V608.80H523.46V610.50ZM523.46 610.50V609.22H525.58V610.50ZM525.58 610.50V609.86H527.70V610.50ZM527.70 610.50V608.51H529.82V610.50ZM529.82 610.50V608.72H531.94V610.50ZM531.94 610.50V608.28H534.06V610.50ZM534.06 610.50V608.32H536.18V610.50ZM536.18 610.50V608.31H538.30V610.50ZM538.30 610.50V608.81H540.42V610.50ZM540.42 610.50V609.76H542.54V610.50ZM542.54 610.50V608.23H544.66V610.50ZM544.66 610.50V608.30H546.78V610.50ZM546.78 610.50V607.98H548.90V610.50ZM548.90 610.50V608.30H551.02V610.50ZM551.02 610.50V608.41H553.14V610.50ZM553.14 610.50V608.86H555.26V610.50ZM555.26 610.50V609.74H557.38V610.50ZM557.38 610.50V608.16H559.50V610.50ZM559.50 610.50V608.31H561.62V610.50ZM561.62 610.50V608.39H563.74V610.50ZM563.74 610.50V608.36H565.86V610.50ZM565.86 610.50V608.50H567.98V610.50ZM567.98 610.50V608.88H570.10V610.50ZM570.10 610.50V609.80H572.22V610.50ZM572.22 610.50V607.99H574.34V610.50ZM574.34 610.50V608.11H576.46V610.50ZM576.46 610.50V608.42H578.58V610.50ZM578.58 610.50V608.42H580.70V610.50ZM580.70 610.50V608.48H582.82V610.50ZM582.82 610.50V608.98H584.94V610.50ZM584.94 610.50V609.84H587.06V610.50ZM587.06 610.50V608.19H589.18V610.50ZM589.18 610.50V608.11H591.30V610.50ZM591.30 610.50V608.45H593.42V610.50ZM593.42 610.50V608.52H595.54V610.50ZM595.54 610.50V608.81H597.66V610.50ZM597.66 610.50V609.24H599.78V610.50ZM599.78 610.50V609.88H601.90V610.50ZM601.90 610.50V608.72H604.02V610.50ZM604.02 610.50V608.46H606.14V610.50ZM606.14 610.50V608.82H608.26V610.50ZM608.26 610.50V608.94H610.38V610.50ZM610.38 610.50V608.68H612.50V610.50ZM612.50 610.50V609.26H614.62V610.50ZM614.62 610.50V609.90H616.74V610.50ZM616.74 610.50V608.83H618.86V610.50ZM618.86 610.50V609.04H620.98V610.50ZM620.98 610.50V608.90H623.10V610.50ZM623.10 610.50V608.80H625.22V610.50ZM625.22 610.50V608.95H627.34V610.50ZM627.34 610.50V609.37H629.46V610.50ZM629.46 610.50V609.90H631.58V610.50ZM631.58 610.50V609.05H633.70V610.50ZM633.70 610.50V609.11H635.82V610.50ZM635.82 610.50V608.92H637.94V610.50ZM637.94 610.50V609.04H640.06V610.50ZM640.06 610.50V609.04H642.18V610.50ZM642.18 610.50V609.51H644.30V610.50ZM644.30 610.50V609.90H646.42V610.50ZM646.42 610.50V608.96H648.54V610.50ZM648.54 610.50V608.88H650.66V610.50ZM650.66 610.50V608.96H652.78V610.50ZM652.78 610.50V609.01H654.90V610.50ZM654.90 610.50V609.08H657.02V610.50ZM657.02 610.50V609.45H659.14V610.50ZM659.14 610.50V609.90H661.26V610.50ZM661.26 610.50V609.12H663.38V610.50ZM663.38 610.50V609.16H665.50V610.50ZM665.50 610.50V609.30H667.62V610.50ZM667.62 610.50V609.32H669.74V610.50ZM669.74 610.50V609.31H671.86V610.50ZM671.86 610.50V609.57H673.98V610.50ZM673.98 610.50V609.90H676.10V610.50ZM676.10 610.50V608.86H678.22V610.50ZM678.22 610.50V608.97H680.34V610.50ZM680.34 610.50V608.77H682.46V610.50ZM682.46 610.50V608.73H684.58V610.50ZM684.58 610.50V608.78H686.70V610.50ZM686.70 610.50V609.32H688.82V610.50ZM688.82 610.50V609.90H690.94V610.50ZM690.94 610.50V608.83H693.06V610.50ZM693.06 610.50V608.77H695.18V610.50ZM695.18 610.50V608.76H697.30V610.50ZM697.30 610.50V608.56H699.42V610.50ZM699.42 610.50V608.48H701.54V610.50ZM701.54 610.50V608.95H703.66V610.50ZM703.66 610.50V609.81H705.78V610.50ZM705.78 610.50V608.32H707.90V610.50ZM707.90 610.50V608.16H710.02V610.50ZM710.02 610.50V608.52H712.14V610.50ZM712.14 610.50V608.22H714.26V610.50ZM714.26 610.50V608.03H716.38V610.50ZM716.38 610.50V608.54H718.50V610.50ZM718.50 610.50V609.52H720.62V610.50ZM720.62 610.50V607.60H722.74V610.50ZM722.74 610.50V607.61H724.86V610.50ZM724.86 610.50V607.03H726.98V610.50ZM726.98 610.50V607.28H729.10V610.50ZM729.10 610.50V606.90H731.22V610.50ZM731.22 610.50V607.24H733.34V610.50ZM733.34 610.50V608.98H735.46V610.50ZM735.46 610.50V605.51H737.58V610.50ZM737.58 610.50V604.16H739.70V610.50ZM739.70 610.50V604.03H741.82V610.50ZM741.82 610.50V604.48H743.94V610.50ZM743.94 610.50V604.39H746.06V610.50ZM746.06 610.50V605.23H748.18V610.50ZM748.18 610.50V607.17H750.30V610.50ZM750.30 610.50V599.92H752.42V610.50ZM752.42 610.50V600.49H754.54V610.50ZM754.54 610.50V597.94H756.66V610.50ZM756.66 610.50V596.76H758.78V610.50ZM758.78 610.50V597.43H760.90V610.50ZM760.90 610.50V600.45H763.02V610.50ZM763.02 610.50V605.10H765.14V610.50ZM765.14 610.50V595.11H767.26V610.50ZM767.26 610.50V594.28H769.38V610.50ZM769.38 610.50V589.13H771.50V610.50ZM771.50 610.50V589.80H773.62V610.50ZM773.62 610.50V590.21H775.74V610.50ZM775.74 610.50V592.64H777.86V610.50ZM777.86 610.50V602.56H779.98V610.50ZM779.98 610.50V583.32H782.10V610.50ZM782.10 610.50V581.84H784.22V610.50ZM784.22 610.50V585.13H786.34V610.50ZM786.34 610.50V584.26H788.46V610.50ZM788.46 610.50V584.16H790.58V610.50ZM790.58 610.50V590.17H792.70V610.50ZM792.70 610.50V599.72H794.82V610.50ZM794.82 610.50V580.43H796.94V610.50ZM796.94 610.50V577.86H799.06V610.50ZM799.06 610.50V580.72H801.18V610.50ZM801.18 610.50V575.26H803.30V610.50ZM803.30 610.50V580.97H805.42V610.50ZM805.42 610.50V587.43H807.54V610.50ZM807.54 610.50V599.22H809.66V610.50ZM809.66 610.50V574.75H811.78V610.50ZM811.78 610.50V577.98H813.90V610.50ZM813.90 610.50V574.68H816.02V610.50ZM816.02 610.50V578.54H818.14V610.50ZM818.14 610.50V579.79H820.26V610.50ZM820.26 610.50V587.16H822.38V610.50ZM822.38 610.50V600.76H824.50V610.50ZM824.50 610.50V578.51H826.62V610.50ZM826.62 610.50V580.00H828.74V610.50ZM828.74 610.50V581.94H830.86V610.50ZM830.86 610.50V576.40H832.98V610.50ZM832.98 610.50V582.53H835.10V610.50ZM835.10 610.50V587.53H837.22V610.50ZM837.22 610.50V598.93H839.34V610.50ZM839.34 610.50V577.73H841.46V610.50ZM841.46 610.50V578.99H843.58V610.50ZM843.58 610.50V578.07H845.70V610.50ZM845.70 610.50V578.38H847.82V610.50ZM847.82 610.50V578.20H849.94V610.50ZM849.94 610.50V589.97H852.06V610.50ZM852.06 610.50V599.76H854.18V610.50ZM854.18 610.50V581.64H856.30V610.50ZM856.30 610.50V581.40H858.42V610.50ZM858.42 610.50V578.87H860.54V610.50ZM860.54 610.50V581.79H862.66V610.50ZM862.66 610.50V583.23H864.78V610.50ZM864.78 610.50V589.52H866.90V610.50ZM866.90 610.50V600.58H869.02V610.50ZM869.02 610.50V585.25H871.14V610.50ZM871.14 610.50V584.81H873.26V610.50ZM873.26 610.50V586.92H875.38V610.50ZM875.38 610.50V588.32H877.50V610.50ZM877.50 610.50V589.41H879.62V610.50ZM879.62 610.50V596.04H881.74V610.50ZM881.74 610.50V603.85H883.86V610.50ZM883.86 610.50V592.17H885.98V610.50ZM885.98 610.50V590.91H888.10V610.50ZM888.10 610.50V593.34H890.22V610.50ZM890.22 610.50V594.05H892.34V610.50ZM892.34 610.50V595.64H894.46V610.50ZM894.46 610.50V601.28H896.58V610.50ZM896.58 610.50V606.01H898.70V610.50ZM898.70 610.50V596.76H900.82V610.50ZM900.82 610.50V597.54H902.94V610.50ZM902.94 610.50V600.34H905.06V610.50ZM905.06 610.50V601.13H907.18V610.50ZM907.18 610.50V601.40H909.30V610.50ZM909.30 610.50V604.30H911.42V610.50ZM911.42 610.50V607.48H913.54V610.50ZM913.54 610.50V602.14H915.66V610.50ZM915.66 610.50V600.82H917.78V610.50ZM917.78 610.50V600.93H919.90V610.50ZM919.90 610.50V601.06H922.02V610.50ZM922.02 610.50V603.11H924.14V610.50ZM924.14 610.50V604.17H926.26V610.50ZM926.26 610.50V607.60H928.38V610.50ZM928.38 610.50V603.13H930.50V610.50ZM930.50 610.50V601.74H932.62V610.50ZM932.62 610.50V601.93H934.74V610.50ZM934.74 610.50V603.61H936.86V610.50ZM936.86 610.50V602.87H938.98V610.50ZM938.98 610.50V605.51H941.10V610.50ZM941.10 610.50V608.07H943.22V610.50ZM943.22 610.50V602.43H945.34V610.50ZM945.34 610.50V602.52H947.46V610.50ZM947.46 610.50V603.81H949.58V610.50ZM949.58 610.50V603.44H951.70V610.50ZM951.70 610.50V603.59H953.82V610.50ZM953.82 610.50V605.44H955.94V610.50ZM955.94 610.50V608.17H958.06V610.50ZM958.06 610.50V603.39H960.18V610.50ZM960.18 610.50V602.50H962.30V610.50ZM962.30 610.50V603.87H964.42V610.50ZM964.42 610.50V603.02H966.54V610.50ZM966.54 610.50V603.52H968.66V610.50ZM968.66 610.50V605.72H970.78V610.50ZM970.78 610.50V608.03H972.90V610.50ZM972.90 610.50V602.58H975.02V610.50ZM975.02 610.50V602.56H977.14V610.50ZM977.14 610.50V603.47H979.26V610.50ZM979.26 610.50V601.80H981.38V610.50ZM981.38 610.50V602.46H983.50V610.50ZM983.50 610.50V604.06H985.62V610.50ZM985.62 610.50V607.99H987.74V610.50ZM987.74 610.50V602.70H989.86V610.50ZM989.86 610.50V602.95H991.98V610.50ZM991.98 610.50V601.51H994.10V610.50ZM994.10 610.50V602.60H996.22V610.50Z" fill="#f7a815"/>
<g font-family="Liberation Sans" font-size="11" font-weight="bold" fill="#b8b8b8" stroke="#1e1e1e" stroke-width="0.35" paint-order="stroke" text-anchor="middle"><text x="287.1" y="606.0">3</text><text x="289.2" y="606.0">2</text><text x="291.3" y="605.9">9</text><text x="293.4" y="605.9">9</text><text x="295.6" y="605.9">12</text><text x="297.7" y="605.9">13</text><text x="299.8" y="605.9">13</text><text x="301.9" y="605.9">12</text><text x="304.0" y="606.0">5</text><text x="306.2" y="605.8">20</text><text x="308.3" y="605.8">20</text><text x="310.4" y="605.8">21</text><text x="312.5" y="605.8">25</text><text x="314.6" y="605.8">28</text><text x="316.8" y="605.8">19</text><text x="318.9" y="605.9">9</text><text x="321.0" y="605.7">33</text><text x="323.1" y="605.7">38</text><text x="325.2" y="605.7">36</text><text x="327.4" y="605.7">36</text><text x="329.5" y="605.7">41</text><text x="331.6" y="605.8">26</text><text x="333.7" y="605.9">15</text><text x="335.8" y="605.7">42</text><text x="338.0" y="605.7">42</text><text x="340.1" y="605.7">42</text><text x="342.2" y="605.6">44</text><text x="344.3" y="605.6">48</text><text x="346.4" y="605.7">32</text><text x="348.6" y="605.9">17</text><text x="350.7" y="605.6">51</text><text x="352.8" y="605.6">50</text><text x="354.9" y="605.6">52</text><text x="357.0" y="605.6">45</text><text x="359.2" y="605.6">44</text><text x="361.3" y="605.7">35</text><text x="363.4" y="605.8">19</text><text x="365.5" y="605.6">54</text><text x="367.6" y="605.6">54</text><text x="369.8" y="605.6">56</text><text x="371.9" y="605.6">52</text><text x="374.0" y="605.6">47</text><text x="376.1" y="605.7">40</text><text x="378.2" y="605.9">18</text><text x="380.4" y="605.6">48</text><text x="382.5" y="605.6">52</text><text x="384.6" y="605.6">50</text><text x="386.7" y="605.6">52</text><text x="388.8" y="605.6">48</text><text x="391.0" y="605.7">32</text><text x="393.1" y="605.9">17</text><text x="395.2" y="605.7">42</text><text x="397.3" y="605.6">45</text><text x="399.4" y="605.6">47</text><text x="401.6" y="605.7">39</text><text x="403.7" y="605.7">40</text><text x="405.8" y="605.8">26</text><text x="407.9" y="605.9">14</text><text x="410.0" y="605.7">43</text><text x="412.2" y="605.7">41</text><text x="414.3" y="605.7">42</text><text x="416.4" y="605.7">35</text><text x="418.5" y="605.7">36</text><text x="420.6" y="605.8">26</text><text x="422.8" y="605.9">12</text><text x="424.9" y="605.7">34</text><text x="427.0" y="605.7">37</text><text x="429.1" y="605.7">36</text><text x="431.2" y="605.8">31</text><text x="433.4" y="605.8">30</text><text x="435.5" y="605.8">19</text><text x="437.6" y="605.9">10</text><text x="439.7" y="605.8">29</text><text x="441.8" y="605.8">31</text><text x="444.0" y="605.7">33</text><text x="446.1" y="605.8">31</text><text x="448.2" y="605.7">32</text><text x="450.3" y="605.8">28</text><text x="452.4" y="605.9">12</text><text x="454.6" y="605.7">43</text><text x="456.7" y="605.7">43</text><text x="458.8" y="605.6">44</text><text x="460.9" y="605.6">45</text><text x="463.0" y="605.6">54</text><text x="465.2" y="605.7">37</text><text x="467.3" y="605.8">19</text><text x="469.4" y="605.5">60</text><text x="471.5" y="605.4">72</text><text x="473.6" y="605.5">60</text><text x="475.8" y="605.5">68</text><text x="477.9" y="605.4">69</text><text x="480.0" y="605.5">59</text><text x="482.1" y="605.8">28</text><text x="484.2" y="605.3">93</text><text x="486.4" y="605.3">89</text><text x="488.5" y="605.2">98</text><text x="490.6" y="605.2">101</text><text x="492.7" y="605.1">117</text><text x="494.8" y="605.2">96</text><text x="497.0" y="605.7">40</text><text x="499.1" y="605.0">125</text><text x="501.2" y="604.9">136</text><text x="503.3" y="604.9">141</text><text x="505.4" y="604.8">154</text><text x="507.6" y="604.7">158</text><text x="509.7" y="605.1">116</text><text x="511.8" y="605.6">53</text><text x="513.9" y="604.5">183</text><text x="516.0" y="604.5">191</text><text x="518.2" y="604.4">204</text><text x="520.3" y="604.2">227</text><text x="522.4" y="604.3">212</text><text x="524.5" y="604.7">160</text><text x="526.6" y="605.4">80</text><text x="528.8" y="604.0">249</text><text x="530.9" y="604.2">223</text><text x="533.0" y="603.8">278</text><text x="535.1" y="603.8">273</text><text x="537.2" y="603.8">274</text><text x="539.4" y="604.3">211</text><text x="541.5" y="605.3">93</text><text x="543.6" y="603.7">284</text><text x="545.7" y="603.8">275</text><text x="547.8" y="603.5">315</text><text x="550.0" y="603.8">275</text><text x="552.1" y="603.9">261</text><text x="554.2" y="604.4">205</text><text x="556.3" y="605.2">95</text><text x="558.4" y="603.7">292</text><text x="560.6" y="603.8">274</text><text x="562.7" y="603.9">264</text><text x="564.8" y="603.9">268</text><text x="566.9" y="604.0">250</text><text x="569.0" y="604.4">202</text><text x="571.2" y="605.3">87</text><text x="573.3" y="603.5">314</text><text x="575.4" y="603.6">299</text><text x="577.5" y="603.9">260</text><text x="579.6" y="603.9">260</text><text x="581.8" y="604.0">252</text><text x="583.9" y="604.5">190</text><text x="586.0" y="605.3">83</text><text x="588.1" y="603.7">289</text><text x="590.2" y="603.6">299</text><text x="592.4" y="604.0">256</text><text x="594.5" y="604.0">248</text><text x="596.6" y="604.3">211</text><text x="598.7" y="604.7">158</text><text x="600.8" y="605.4">78</text><text x="603.0" y="604.2">223</text><text x="605.1" y="604.0">255</text><text x="607.2" y="604.3">210</text><text x="609.3" y="604.4">195</text><text x="611.4" y="604.2">228</text><text x="613.6" y="604.8">155</text><text x="615.7" y="605.5">65</text><text x="617.8" y="604.3">209</text><text x="619.9" y="604.5">183</text><text x="622.0" y="604.4">200</text><text x="624.2" y="604.3">213</text><text x="626.3" y="604.4">194</text><text x="628.4" y="604.9">141</text><text x="630.5" y="605.5">60</text><text x="632.6" y="604.6">181</text><text x="634.8" y="604.6">174</text><text x="636.9" y="604.4">197</text><text x="639.0" y="604.5">182</text><text x="641.1" y="604.5">182</text><text x="643.2" y="605.0">124</text><text x="645.4" y="605.5">57</text><text x="647.5" y="604.5">193</text><text x="649.6" y="604.4">203</text><text x="651.7" y="604.5">192</text><text x="653.8" y="604.5">186</text><text x="656.0" y="604.6">177</text><text x="658.1" y="605.0">131</text><text x="660.2" y="605.6">54</text><text x="662.3" y="604.6">172</text><text x="664.4" y="604.7">168</text><text x="666.6" y="604.8">150</text><text x="668.7" y="604.8">147</text><text x="670.8" y="604.8">149</text><text x="672.9" y="605.1">116</text><text x="675.0" y="605.5">63</text><text x="677.2" y="604.4">205</text><text x="679.3" y="604.5">191</text><text x="681.4" y="604.3">216</text><text x="683.5" y="604.2">221</text><text x="685.6" y="604.3">215</text><text x="687.8" y="604.8">147</text><text x="689.9" y="605.4">69</text><text x="692.0" y="604.3">209</text><text x="694.1" y="604.3">216</text><text x="696.2" y="604.3">218</text><text x="698.4" y="604.1">243</text><text x="700.5" y="604.0">253</text><text x="702.6" y="604.4">194</text><text x="704.7" y="605.3">86</text><text x="706.8" y="603.8">272</text><text x="709.0" y="603.7">293</text><text x="711.1" y="604.0">247</text><text x="713.2" y="603.7">285</text><text x="715.3" y="603.5">309</text><text x="717.4" y="604.0">245</text><text x="719.6" y="605.0">123</text><text x="721.7" y="603.1">362</text><text x="723.8" y="603.1">361</text><text x="725.9" y="602.5">434</text><text x="728.0" y="602.8">402</text><text x="730.2" y="602.4">450</text><text x="732.3" y="602.7">407</text><text x="734.4" y="604.5">190</text><text x="736.5" y="601.0">624</text><text x="738.6" y="599.7">793</text><text x="740.8" y="599.5">809</text><text x="742.9" y="600.0">752</text><text x="745.0" y="599.9">764</text><text x="747.1" y="600.7">659</text><text x="749.2" y="602.7" opacity=".45">416</text><text x="751.4" y="595.4">1k</text><text x="753.5" y="596.0">1k</text><text x="755.6" y="593.4">2k</text><text x="757.7" y="592.3">2k</text><text x="759.8" y="592.9">2k</text><text x="762.0" y="596.0">1k</text><text x="764.1" y="600.6" opacity=".45">675</text><text x="766.2" y="590.6">2k</text><text x="768.3" y="589.8">2k</text><text x="770.4" y="584.6">3k</text><text x="772.6" y="585.3">3k</text><text x="774.7" y="585.7">3k</text><text x="776.8" y="588.1">2k</text><text x="778.9" y="598.1" opacity=".45">993</text><text x="781.0" y="578.8">3k</text><text x="783.2" y="577.3">4k</text><text x="785.3" y="580.6">3k</text><text x="787.4" y="579.8">3k</text><text x="789.5" y="579.7">3k</text><text x="791.6" y="585.7">3k</text><text x="793.8" y="595.2" opacity=".45">1k</text><text x="795.9" y="575.9">4k</text><text x="798.0" y="573.4">4k</text><text x="800.1" y="576.2">4k</text><text x="802.2" y="570.8">4k</text><text x="804.4" y="576.5">4k</text><text x="806.5" y="582.9">3k</text><text x="808.6" y="594.7" opacity=".45">1k</text><text x="810.7" y="570.2">4k</text><text x="812.8" y="573.5">4k</text><text x="815.0" y="570.2">4k</text><text x="817.1" y="574.0">4k</text><text x="819.2" y="575.3">4k</text><text x="821.3" y="582.7">3k</text><text x="823.4" y="596.3" opacity=".45">1k</text><text x="825.6" y="574.0">4k</text><text x="827.7" y="575.5">4k</text><text x="829.8" y="577.4">4k</text><text x="831.9" y="571.9">4k</text><text x="834.0" y="578.0">3k</text><text x="836.2" y="583.0">3k</text><text x="838.3" y="594.4" opacity=".45">1k</text><text x="840.4" y="573.2">4k</text><text x="842.5" y="574.5">4k</text><text x="844.6" y="573.6">4k</text><text x="846.8" y="573.9">4k</text><text x="848.9" y="573.7">4k</text><text x="851.0" y="585.5">3k</text><text x="853.1" y="595.3" opacity=".45">1k</text><text x="855.2" y="577.1">4k</text><text x="857.4" y="576.9">4k</text><text x="859.5" y="574.4">4k</text><text x="861.6" y="577.3">4k</text><text x="863.7" y="578.7">3k</text><text x="865.8" y="585.0">3k</text><text x="868.0" y="596.1" opacity=".45">1k</text><text x="870.1" y="580.8">3k</text><text x="872.2" y="580.3">3k</text><text x="874.3" y="582.4">3k</text><text x="876.4" y="583.8">3k</text><text x="878.6" y="584.9">3k</text><text x="880.7" y="591.5">2k</text><text x="882.8" y="599.4" opacity=".45">831</text><text x="884.9" y="587.7">2k</text><text x="887.0" y="586.4">2k</text><text x="889.2" y="588.8">2k</text><text x="891.3" y="589.6">2k</text><text x="893.4" y="591.1">2k</text><text x="895.5" y="596.8">1k</text><text x="897.6" y="601.5" opacity=".45">561</text><text x="899.8" y="592.3">2k</text><text x="901.9" y="593.0">2k</text><text x="904.0" y="595.8">1k</text><text x="906.1" y="596.6">1k</text><text x="908.2" y="596.9">1k</text><text x="910.4" y="599.8">775</text><text x="912.5" y="603.0" opacity=".45">377</text><text x="914.6" y="597.6">1k</text><text x="916.7" y="596.3">1k</text><text x="918.8" y="596.4">1k</text><text x="921.0" y="596.6">1k</text><text x="923.1" y="598.6">924</text><text x="925.2" y="599.7">791</text><text x="927.3" y="603.1" opacity=".45">363</text><text x="929.4" y="598.6">921</text><text x="931.6" y="597.2">1k</text><text x="933.7" y="597.4">1k</text><text x="935.8" y="599.1">861</text><text x="937.9" y="598.4">954</text><text x="940.0" y="601.0">624</text><text x="942.2" y="603.6" opacity=".45">304</text><text x="944.3" y="597.9">1k</text><text x="946.4" y="598.0">997</text><text x="948.5" y="599.3">836</text><text x="950.6" y="598.9">883</text><text x="952.8" y="599.1">864</text><text x="954.9" y="600.9">633</text><text x="957.0" y="603.7">291</text><text x="959.1" y="598.9">889</text><text x="961.2" y="598.0">1k</text><text x="963.4" y="599.4">829</text><text x="965.5" y="598.5">935</text><text x="967.6" y="599.0">872</text><text x="969.7" y="601.2">598</text><text x="971.8" y="603.5" opacity=".45">309</text><text x="974.0" y="598.1">990</text><text x="976.1" y="598.1">992</text><text x="978.2" y="599.0">879</text><text x="980.3" y="597.3">1k</text><text x="982.4" y="598.0">1k</text><text x="984.6" y="599.6">805</text><text x="986.7" y="603.5" opacity=".45">314</text><text x="988.8" y="598.2">975</text><text x="990.9" y="598.4">944</text><text x="993.0" y="597.0">1k</text><text x="995.2" y="598.1">987</text></g>
<path d="M285.5 560V611.0M278 562.5H285.5M278 578.5H285.5M278 594.5H285.5M278 610.5H285.5" stroke="#6a6a6a" stroke-width="1" fill="none"/>
<path d="M285.5 611.0H999" stroke="#6a6a6a" stroke-width="1" fill="none"/>
<g font-family="Liberation Sans" font-size="10.5" fill="#a9a9a9"><text x="273.5" y="566.2" text-anchor="end">6k</text><text x="273.5" y="582.2" text-anchor="end">4k</text><text x="273.5" y="598.2" text-anchor="end">2k</text><text x="273.5" y="614.2" text-anchor="end">0</text><text x="403.5" y="628.5">M05</text><text x="532.6" y="628.5">M07</text><text x="664" y="628.5">M09</text><text x="793.2" y="628.5">M11</text></g>
<text x="923.3" y="628.5" font-family="Liberation Sans" font-size="10.5" font-weight="bold" fill="#bdbdbd">2021</text>
</svg>
<!--/CHART-->
<!-- tabs -->
<div class="a" style="left:248px;top:641px;width:125px;height:21px;background:#222"></div>
<div class="t" style="left:260px;top:650px;font-size:12.8px;color:#c8c4bc">Заболели по дни</div>
<div class="a" style="left:378px;top:642px;width:162px;height:25px;border:1px solid #393939;border-top:none"></div>
<div class="t" style="left:390px;top:650px;font-size:12.7px;color:#c8c4bc">Заболели с натрупване</div>
<div class="a" style="left:545px;top:642px;width:159px;height:25px;border:1px solid #393939;border-top:none"></div>
<div class="t" style="left:557px;top:650px;font-size:12.8px;color:#c8c4bc">Карантинирани по дни</div>

<!-- right column -->
<div class="a" style="left:1040px;top:59px;width:199px;height:79px;background:#002672;border:1px solid #3a4660;border-right:none"></div>
<div class="t c" style="left:1060px;width:180px;top:65px;font-size:28.6px;line-height:32.6px;color:#fff;white-space:normal">Мобилна<br>версия</div>

<div class="a" style="left:1040px;top:149px;width:199px;height:513px;background:#222;border:1px solid #393939;border-right:none;border-bottom:none"></div>
<div class="t" style="left:1046px;top:157px;font-size:14.6px;line-height:20px;color:#c8c4bc;white-space:normal;width:190px">Брой карантинирани по<br>области</div>

<!--BARS-->
<svg class="a" style="left:1040px;top:149px" width="199" height="513" viewBox="1040 149 199 513">
<path d="M1145.5 223.5H1226.5 M1145.5 252.9H1226.5 M1145.5 282.3H1226.5 M1145.5 311.7H1226.5 M1145.5 341.1H1226.5 M1145.5 370.5H1226.5 M1145.5 399.9H1226.5 M1145.5 429.3H1226.5 M1145.5 458.7H1226.5 M1145.5 488.1H1226.5 M1145.5 517.5H1226.5 M1145.5 546.9H1226.5 M1145.5 576.3H1226.5 M1145.5 605.7H1226.5 M1226.5 223.5V634" stroke="#4a4a4a" stroke-width="1" stroke-dasharray="4 3" fill="none"/>
<g fill="#fcab0c"><rect x="1146.0" y="224.1" width="53.9" height="12.6"/><rect x="1146.0" y="238.8" width="24.1" height="12.6"/><rect x="1146.0" y="253.5" width="18.5" height="12.6"/><rect x="1146.0" y="268.2" width="17.3" height="12.6"/><rect x="1146.0" y="282.9" width="12.9" height="12.6"/><rect x="1146.0" y="297.6" width="12.4" height="12.6"/><rect x="1146.0" y="312.3" width="10.2" height="12.6"/><rect x="1146.0" y="327.0" width="9.0" height="12.6"/><rect x="1146.0" y="341.7" width="8.7" height="12.6"/><rect x="1146.0" y="356.4" width="8.7" height="12.6"/><rect x="1146.0" y="371.1" width="8.5" height="12.6"/><rect x="1146.0" y="385.8" width="8.3" height="12.6"/><rect x="1146.0" y="400.5" width="7.2" height="12.6"/><rect x="1146.0" y="415.2" width="7.2" height="12.6"/><rect x="1146.0" y="429.9" width="7.1" height="12.6"/><rect x="1146.0" y="444.6" width="6.3" height="12.6"/><rect x="1146.0" y="459.3" width="5.7" height="12.6"/><rect x="1146.0" y="474.0" width="5.4" height="12.6"/><rect x="1146.0" y="488.7" width="5.2" height="12.6"/><rect x="1146.0" y="503.4" width="4.9" height="12.6"/><rect x="1146.0" y="518.1" width="4.9" height="12.6"/><rect x="1146.0" y="532.8" width="4.8" height="12.6"/><rect x="1146.0" y="547.5" width="4.8" height="12.6"/><rect x="1146.0" y="562.2" width="4.3" height="12.6"/><rect x="1146.0" y="576.9" width="4.0" height="12.6"/><rect x="1146.0" y="591.6" width="3.7" height="12.6"/><rect x="1146.0" y="606.3" width="3.4" height="12.6"/><rect x="1146.0" y="621.0" width="3.0" height="12.6"/></g>
<path d="M1145.5 223V634.5H1226.5M1226.5 630V634.5" stroke="#6a6a6a" stroke-width="1" fill="none"/>
<path d="M1139 230.4H1145.5 M1139 259.8H1145.5 M1139 289.2H1145.5 M1139 318.6H1145.5 M1139 348.0H1145.5 M1139 377.4H1145.5 M1139 406.8H1145.5 M1139 436.2H1145.5 M1139 465.6H1145.5 M1139 495.0H1145.5 M1139 524.4H1145.5 M1139 553.8H1145.5 M1139 583.2H1145.5 M1139 612.6H1145.5" stroke="#6a6a6a" stroke-width="1" fill="none"/>
<g font-family="Liberation Sans" font-size="11.5" fill="#b8b4ac"><text x="1133" y="235.4" text-anchor="end">София-град</text><text x="1133" y="264.8" text-anchor="end">Варна</text><text x="1133" y="294.2" text-anchor="end">Благоевград</text><text x="1133" y="323.6" text-anchor="end">Пазарджик</text><text x="1133" y="353.0" text-anchor="end">Кърджали</text><text x="1133" y="382.4" text-anchor="end">Хасково</text><text x="1133" y="411.8" text-anchor="end">София</text><text x="1133" y="441.2" text-anchor="end">Шумен</text><text x="1133" y="470.6" text-anchor="end">Враца</text><text x="1133" y="500.0" text-anchor="end">Ямбол</text><text x="1133" y="529.4" text-anchor="end">Разград</text><text x="1133" y="558.8" text-anchor="end">Монтана</text><text x="1133" y="588.2" text-anchor="end">Търговище</text><text x="1133" y="617.6" text-anchor="end">Смолян</text><text x="1202.4" y="235.9">133k</text><text x="1172.6" y="250.6">59.4k</text><text x="1167.0" y="265.3">45.7k</text><text x="1165.8" y="280.0">42.8k</text><text x="1161.4" y="294.7">31.9k</text><text x="1160.9" y="309.4">30.7k</text><text x="1158.7" y="324.1">25.1k</text><text x="1157.5" y="338.8">22.2k</text><text x="1157.2" y="353.5">21.6k</text><text x="1157.2" y="368.2">21.4k</text><text x="1157.0" y="382.9">21k</text><text x="1156.8" y="397.6">20.6k</text><text x="1155.7" y="412.3">17.9k</text><text x="1155.7" y="427.0">17.9k</text><text x="1155.6" y="441.7">17.5k</text><text x="1154.8" y="456.4">15.6k</text><text x="1154.2" y="471.1">14.1k</text><text x="1153.9" y="485.8">13.3k</text><text x="1153.7" y="500.5">12.8k</text><text x="1153.4" y="515.2">12.1k</text><text x="1153.4" y="529.9">12.1k</text><text x="1153.3" y="544.6">11.9k</text><text x="1153.3" y="559.3">11.8k</text><text x="1152.8" y="574.0">10.7k</text><text x="1152.5" y="588.7">9.9k</text><text x="1152.2" y="603.4">9.1k</text><text x="1151.9" y="618.1">8.5k</text><text x="1151.5" y="632.8">7.5k</text><text x="1145.5" y="659.0" text-anchor="middle">0</text><text x="1214" y="659.0">200k</text></g>
</svg>
<!--/BARS-->
</body></html>
